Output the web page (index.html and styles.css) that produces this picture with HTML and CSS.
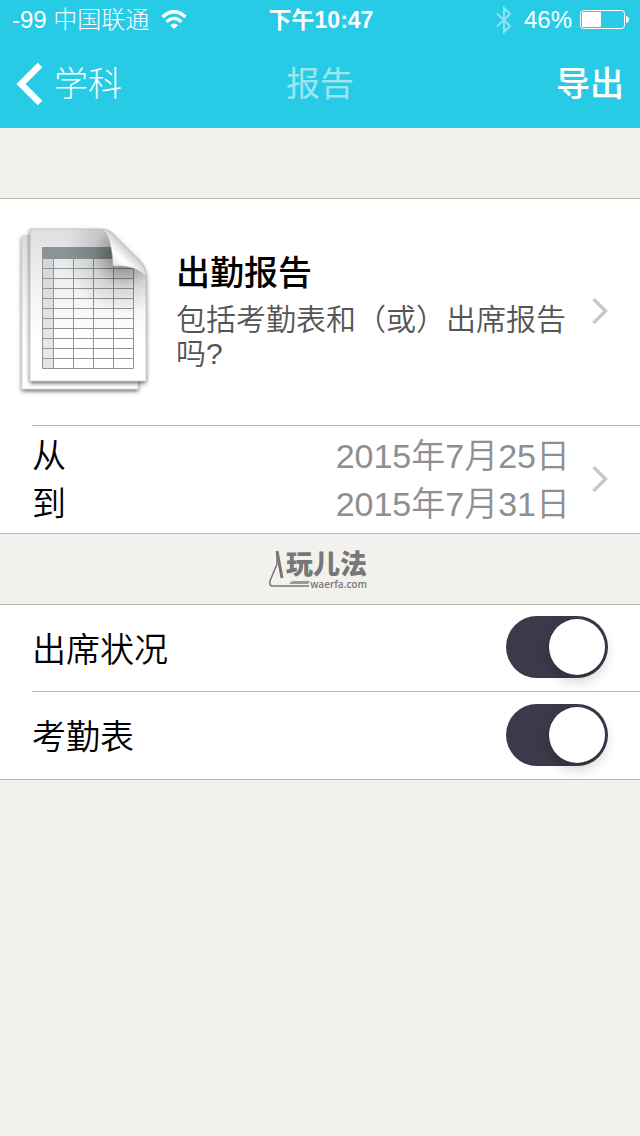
FILE: index.html
```html
<!DOCTYPE html>
<html lang="zh-CN">
<head>
    <meta charset="UTF-8">
    <meta name="viewport" content="width=device-width, initial-scale=1.0">
    <title>报告</title>
    <link rel="stylesheet" href="styles.css">
</head>
<body>
    <header>
        <div class="status-bar">
            <div class="status-left">
                <span>-99 中国联通</span>
                <svg width="26" height="20" viewBox="0 0 26 20" aria-hidden="true">
                    <path d="M1.5 7 Q13 -3.5 24.5 7" fill="none" stroke="#fff" stroke-width="3.5"/>
                    <path d="M5.5 11.8 Q13 5 20.5 11.8" fill="none" stroke="#fff" stroke-width="3.2"/>
                    <path d="M9 15.3 Q13 11.5 17 15.3 L13 19 Z" fill="#fff"/>
                </svg>
            </div>
            <div class="status-time">下午10:47</div>
            <div class="status-right">
                <svg width="16" height="28" viewBox="0 0 16 28" aria-hidden="true">
                    <path d="M1 7.5 L14 20 L8 26 V2 L14 8 L1 20.5" fill="none" stroke="#8fe3f1" stroke-width="2"/>
                </svg>
                <span>46%</span>
                <svg width="50" height="20" viewBox="0 0 50 20" aria-hidden="true">
                    <rect x="0.5" y="0.5" width="44" height="18" rx="3" fill="none" stroke="#fff"/>
                    <rect x="2" y="2" width="19" height="15" rx="1" fill="#fff"/>
                    <path d="M46 6 Q49 6.5 49 9.5 Q49 12.5 46 13 Z" fill="#fff"/>
                </svg>
            </div>
        </div>
        <nav class="nav-bar">
            <a class="back" href="#">
                <svg width="28" height="44" viewBox="0 0 28 44" aria-hidden="true">
                    <path d="M24 3 L5 22 L24 41" fill="none" stroke="#fff" stroke-width="6.5"/>
                </svg>
                <span>学科</span>
            </a>
            <h1>报告</h1>
            <button class="export" type="button">导出</button>
        </nav>
    </header>

    <main>
        <div class="group">
            <a class="row report" href="#">
                <svg class="doc-icon" width="136" height="176" viewBox="0 0 136 176" aria-hidden="true">
                    <defs>
                        <linearGradient id="paper" x1="0" y1="0" x2="0" y2="1">
                            <stop offset="0" stop-color="#dedede"/>
                            <stop offset="0.4" stop-color="#f3f3f3"/>
                            <stop offset="0.75" stop-color="#fff"/>
                        </linearGradient>
                        <radialGradient id="shade" gradientUnits="userSpaceOnUse" cx="108" cy="32" r="58">
                            <stop offset="0.15" stop-color="#000" stop-opacity="0.4"/>
                            <stop offset="0.55" stop-color="#000" stop-opacity="0.12"/>
                            <stop offset="1" stop-color="#000" stop-opacity="0"/>
                        </radialGradient>
                        <linearGradient id="curl" gradientUnits="userSpaceOnUse" x1="97" y1="38" x2="111" y2="24">
                            <stop offset="0" stop-color="#e8e8e8"/>
                            <stop offset="0.4" stop-color="#fff"/>
                            <stop offset="1" stop-color="#d0d0d0"/>
                        </linearGradient>
                        <filter id="drop" x="-10%" y="-10%" width="120%" height="120%">
                            <feDropShadow dx="0" dy="2" stdDeviation="2" flood-opacity="0.6"/>
                        </filter>
                    </defs>
                    <path d="M6 12 H60 L122 80 V165 H6 Z" fill="url(#paper)" stroke="#bbb" stroke-width="0.5" filter="url(#drop)"/>
                    <path d="M14 5 H84 Q91 5 96 9 L123 36 Q130 43 130 54 V157 H14 Z" fill="url(#paper)" stroke="#aaa" stroke-width="0.5" filter="url(#drop)"/>
                    <rect x="26" y="35" width="11" height="110" fill="#8c9294" fill-opacity="0.22"/>
                    <rect x="26" y="23" width="76" height="12" fill="#8b9396"/>
                    <path d="M26.5 23 V144.5 H117.5 V38 M37.5 35 V144 M57.5 35 V144 M77.5 35 V144 M97.5 35 V144 M26 34.5 H98 M26 44.5 H117 M26 54.5 H117 M26 64.5 H117 M26 74.5 H117 M26 84.5 H117 M26 94.5 H117 M26 104.5 H117 M26 114.5 H117 M26 124.5 H117 M26 134.5 H117" fill="none" stroke="#8e9699"/>
                    <path d="M14 5 H84 Q91 5 96 9 L123 36 Q130 43 130 54 V157 H14 Z" fill="url(#shade)"/>
                    <path d="M86 5 Q96 12 97 42 Q118 40 130 52 Q129 42 123 36 L96 9 Q91 5 86 5 Z" fill="url(#curl)" stroke="#b5b5b5" stroke-width="0.5"/>
                </svg>
                <div class="report-text">
                    <h2>出勤报告</h2>
                    <p>包括考勤表和（或）出席报告吗?</p>
                </div>
                <svg class="chevron" width="16" height="28" viewBox="0 0 16 28" aria-hidden="true">
                    <path d="M1.5 1 L13.5 13 L1.5 25" fill="none" stroke="#c7c7cc" stroke-width="3.5"/>
                </svg>
            </a>
            <a class="row dates" href="#">
                <dl>
                    <dt>从</dt><dd>2015年7月25日</dd>
                    <dt>到</dt><dd>2015年7月31日</dd>
                </dl>
                <svg class="chevron" width="16" height="28" viewBox="0 0 16 28" aria-hidden="true">
                    <path d="M1.5 1 L13.5 13 L1.5 25" fill="none" stroke="#c7c7cc" stroke-width="3.5"/>
                </svg>
            </a>
        </div>

        <div class="brand">
            <svg width="42" height="38" viewBox="0 0 42 38" aria-hidden="true">
                <path d="M8 1 L13 28" fill="none" stroke="#777" stroke-width="3"/>
                <path d="M8 2 L8 14 L1 31 Q0 36 4 36 H40" fill="none" stroke="#777" stroke-width="1.5"/>
                <path d="M20 34 L23 31 H41 L39 34 Z" fill="#999"/>
            </svg>
            <div class="brand-text">
                <span class="brand-name">玩儿法</span>
                <span class="brand-url">waerfa.com</span>
            </div>
        </div>

        <div class="group">
            <label class="row option">
                <span>出席状况</span>
                <input type="checkbox" role="switch" checked>
            </label>
            <label class="row option">
                <span>考勤表</span>
                <input type="checkbox" role="switch" checked>
            </label>
        </div>
    </main>
</body>
</html>
```

FILE: styles.css
```css
* {
    box-sizing: border-box;
}

body {
    margin: 0;
    background-color: #f3f1ed;
    color: #000;
    font-family: "Liberation Sans", "Noto Sans CJK SC", sans-serif;
    font-size: 34px;
    font-weight: 350;
}

h1, h2, p, dl, dd {
    margin: 0;
}

a {
    color: inherit;
    text-decoration: none;
}

svg {
    display: block;
    flex-shrink: 0;
}

header {
    background-color: #27cbe5;
    color: #fff;
    font-weight: 300;
}

/* status bar */
.status-bar {
    display: grid;
    grid-template-columns: 1fr auto 1fr;
    align-items: center;
    height: 40px;
    padding: 0 10px 0 12px;
    font-size: 24px;
    line-height: 38px;
}

.status-left,
.status-right {
    display: flex;
    align-items: center;
    gap: 12px;
}

.status-right {
    justify-content: flex-end;
}

.status-right span {
    margin-right: -4px;
}

.status-time {
    font-size: 23px;
    font-weight: 600;
}

/* navigation */
.nav-bar {
    display: grid;
    grid-template-columns: 1fr auto 1fr;
    align-items: center;
    height: 88px;
    padding: 0 16px;
    line-height: 48px;
}

.back {
    display: flex;
    align-items: center;
    gap: 10px;
}

h1 {
    color: #9ce5f1;
    font-size: 34px;
    font-weight: 400;
}

.export {
    justify-self: end;
    padding: 0;
    border: none;
    background: none;
    color: #fff;
    font: inherit;
    font-weight: 500;
    cursor: pointer;
}

/* lists */
main {
    padding-top: 70px;
}

.group {
    background-color: #fff;
    border-top: 1px solid #b9b5ad;
    border-bottom: 1px solid #b9b5ad;
}

.row {
    display: flex;
    align-items: center;
    padding-right: 32px;
}

.row + .row {
    margin-left: 32px;
    border-top: 1px solid #b9b5ad;
}

.report {
    min-height: 226px;
    padding-left: 16px;
}

.report-text {
    flex: 1;
    padding: 0 24px 2px;
}

.report-text h2 {
    margin-bottom: 8px;
    font-size: 34px;
    font-weight: 500;
    line-height: 44px;
}

.report-text p {
    color: #555;
    font-size: 30px;
    line-height: 34px;
}

.dates {
    min-height: 108px;
}

.dates dl {
    display: grid;
    flex: 1;
    grid-template-columns: auto 1fr;
    padding-right: 22px;
    line-height: 48px;
}

.dates dd {
    color: #8e8e93;
    text-align: right;
}

/* brand strip */
.brand {
    display: flex;
    align-items: center;
    justify-content: center;
    height: 70px;
    padding-right: 4px;
    color: #777;
}

.brand-text {
    display: flex;
    flex-direction: column;
    align-items: flex-end;
    margin-left: -25px;
}

.brand-name {
    font-family: "Noto Sans CJK SC", sans-serif;
    font-size: 27px;
    font-weight: 900;
    line-height: 30px;
}

.brand-url {
    font-family: "Open Sans", sans-serif;
    font-size: 10px;
    font-weight: 600;
    line-height: 12px;
}

.option {
    justify-content: space-between;
    min-height: 88px;
    padding-bottom: 2px;
}

.option:first-child {
    min-height: 86px;
    padding-left: 32px;
}

/* switch */
.option input {
    display: flex;
    align-items: center;
    width: 102px;
    height: 62px;
    margin: 0;
    padding: 3px;
    appearance: none;
    background-color: #e5e5e5;
    border-radius: 31px;
    cursor: pointer;
}

.option input::before {
    content: "";
    width: 56px;
    height: 56px;
    background-color: #fff;
    border-radius: 50%;
    box-shadow: 0 6px 14px rgba(0, 0, 0, 0.2);
}

.option input:checked {
    justify-content: flex-end;
    background-color: #3d394a;
}
```
